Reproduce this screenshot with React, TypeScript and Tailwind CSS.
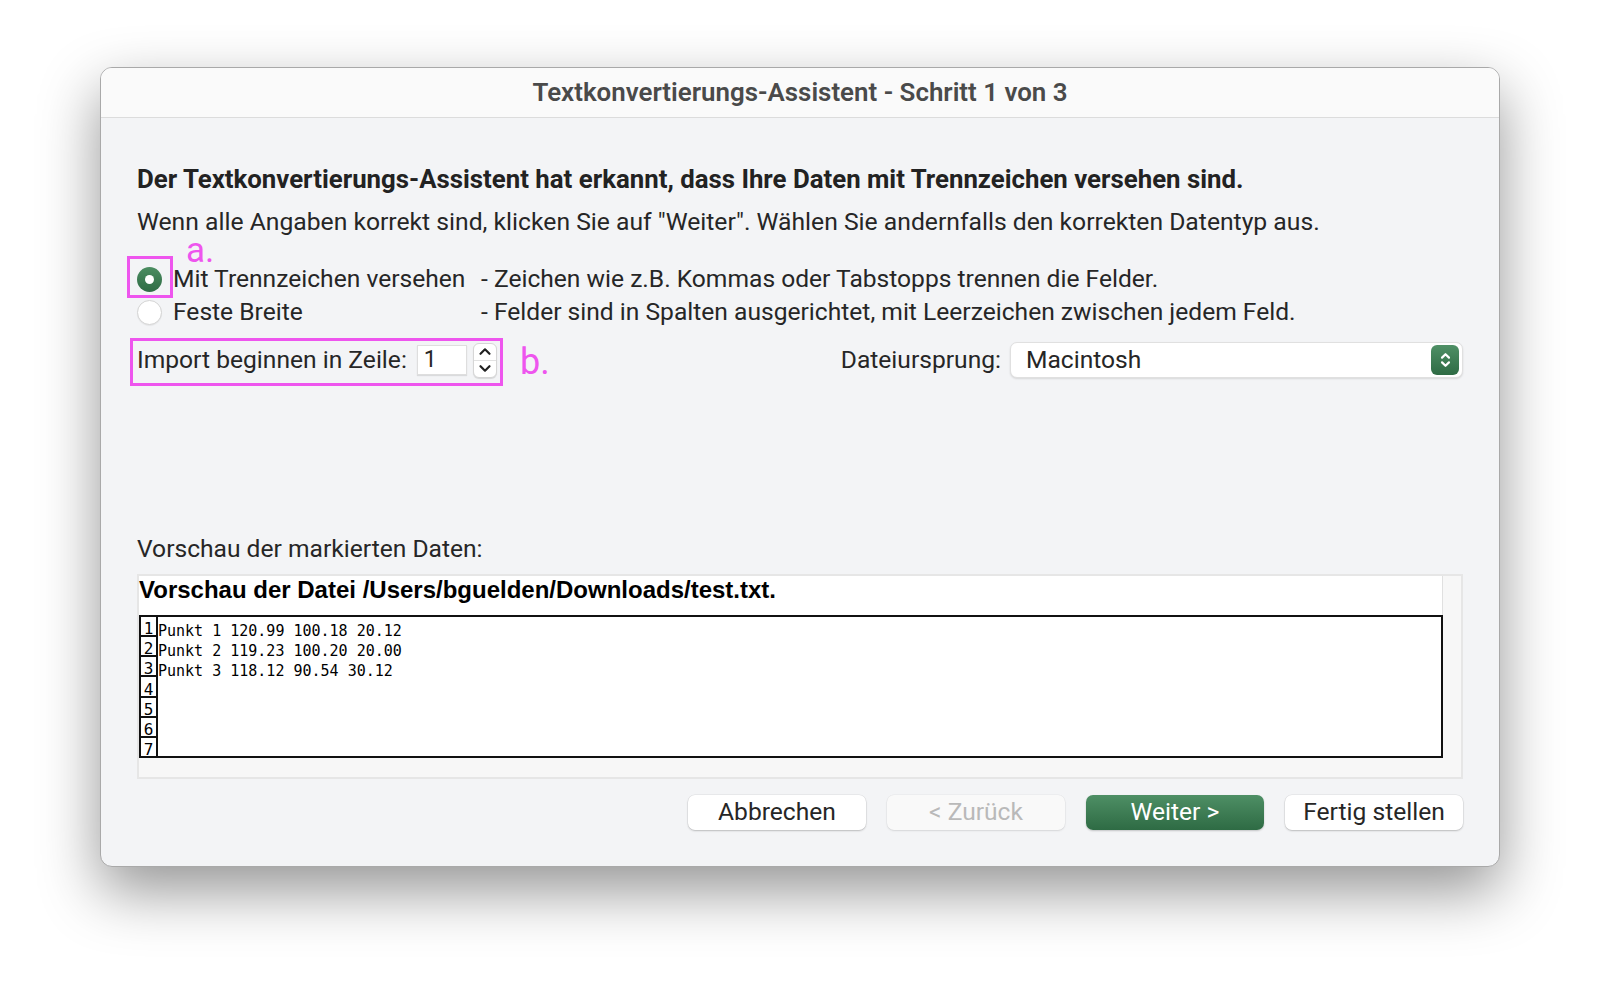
import React from "react";

function UpDown({ color, w, h }: { color: string; w: number; h: number }) {
  return (
    <svg width={w} height={h} viewBox="0 0 12 20" fill="none">
      <path d="M2.8 7.8 L6 4.6 L9.2 7.8" stroke={color} strokeWidth="2" strokeLinecap="round" strokeLinejoin="round" />
      <path d="M2.8 12.2 L6 15.4 L9.2 12.2" stroke={color} strokeWidth="2" strokeLinecap="round" strokeLinejoin="round" />
    </svg>
  );
}

export default function App() {
  const rows = [
    "Punkt 1 120.99 100.18 20.12",
    "Punkt 2 119.23 100.20 20.00",
    "Punkt 3 118.12 90.54 30.12",
    "",
    "",
    "",
    "",
  ];
  return (
    <div className="w-[1600px] h-[1000px] bg-white pt-[67px] pl-[100px] font-[Roboto,sans-serif]">
      <div className="w-[1400px] h-[800px] rounded-[12px] border border-[#a9a9a9] shadow-[0_24px_60px_rgba(0,0,0,0.42)] overflow-hidden flex flex-col bg-[#f3f4f6]">
        {/* Title bar */}
        <div className="h-[50px] shrink-0 bg-[#fafafa] border-b border-[#dcdcdc] flex items-center justify-center text-[25.9px] font-semibold text-[#4a4a4a]">
          Textkonvertierungs-Assistent - Schritt 1 von 3
        </div>

        {/* Body */}
        <div className="flex-1 flex flex-col px-[36px] pt-[46px] text-[#262626]">
          <div className="text-[25.8px] leading-[30px] font-bold text-[#222] whitespace-nowrap">
            Der Textkonvertierungs-Assistent hat erkannt, dass Ihre Daten mit Trennzeichen versehen sind.
          </div>
          <div className="mt-[13px] text-[24.7px] leading-[30px] whitespace-nowrap">
            Wenn alle Angaben korrekt sind, klicken Sie auf "Weiter". Wählen Sie andernfalls den korrekten Datentyp aus.
          </div>

          {/* Radios */}
          <div className="mt-[26px] grid grid-cols-[344px_1fr] text-[24.6px] whitespace-nowrap">
            <div className="relative h-[33px] flex items-center gap-[11px]">
              <div className="w-[25px] h-[25px] rounded-full bg-linear-to-b from-[#4b8d61] to-[#2f6c45] flex items-center justify-center shrink-0">
                <div className="w-[9px] h-[9px] rounded-full bg-white" />
              </div>
              <span>Mit Trennzeichen versehen</span>
              <div className="absolute left-[-10px] top-[-7px] w-[46px] h-[42px] border-[3px] border-[#ee55ee]" />
              <div className="absolute left-[49px] top-[-22px] text-[35px] leading-[20px] text-[#ee55ee]">a.</div>
            </div>
            <div className="h-[33px] flex items-center">- Zeichen wie z.B. Kommas oder Tabstopps trennen die Felder.</div>
            <div className="h-[33px] flex items-center gap-[11px]">
              <div className="w-[25px] h-[25px] rounded-full bg-white border border-[#d4d4d4] shadow-[0_1px_1px_rgba(0,0,0,0.06)] shrink-0" />
              <span>Feste Breite</span>
            </div>
            <div className="h-[33px] flex items-center">- Felder sind in Spalten ausgerichtet, mit Leerzeichen zwischen jedem Feld.</div>
          </div>

          {/* Import row */}
          <div className="mt-[13px] h-[36px] flex items-center justify-between text-[24.6px] whitespace-nowrap relative">
            <div className="flex items-center relative">
              <span>Import beginnen in Zeile:</span>
              <div className="ml-[10px] w-[50px] h-[30px] bg-white border border-[#dedede] shadow-[0_1px_1px_rgba(0,0,0,0.1)] flex items-center pl-[6px] text-[23px]">
                1
              </div>
              <div className="ml-[6px] w-[24px] h-[35px] rounded-[6px] bg-white border border-[#d6d6d6] shadow-[0_1px_1px_rgba(0,0,0,0.12)] flex flex-col overflow-hidden">
                <div className="flex-1 flex items-center justify-center border-b border-[#e2e2e2]">
                  <svg width="14" height="9" viewBox="0 0 14 9" fill="none">
                    <path d="M2.5 6.8 L7 2.3 L11.5 6.8" stroke="#222" strokeWidth="2.2" strokeLinecap="round" strokeLinejoin="round" />
                  </svg>
                </div>
                <div className="flex-1 flex items-center justify-center">
                  <svg width="14" height="9" viewBox="0 0 14 9" fill="none">
                    <path d="M2.5 2.2 L7 6.7 L11.5 2.2" stroke="#222" strokeWidth="2.2" strokeLinecap="round" strokeLinejoin="round" />
                  </svg>
                </div>
              </div>
              <div className="absolute left-[-7px] top-[-4px] w-[373px] h-[48px] border-[3px] border-[#ee55ee]" />
              <div className="absolute left-[383px] top-[0px] text-[36px] leading-[40px] text-[#ee55ee]">b.</div>
            </div>
            <div className="flex items-center">
              <span>Dateiursprung:</span>
              <div className="ml-[9px] w-[453px] h-[36px] rounded-[7px] bg-white border border-[#e0e0e0] shadow-[0_1px_2px_rgba(0,0,0,0.12)] flex items-center justify-between pl-[15px] pr-[3px]">
                <span>Macintosh</span>
                <div className="w-[28px] h-[30px] rounded-[6px] bg-linear-to-b from-[#4f9066] to-[#2e6b44] flex items-center justify-center">
                  <UpDown color="#ffffff" w={13} h={22} />
                </div>
              </div>
            </div>
          </div>

          {/* Preview label */}
          <div className="mt-[156px] text-[24.6px] leading-[30px] whitespace-nowrap">Vorschau der markierten Daten:</div>

          {/* Preview box */}
          <div className="mt-[10px] h-[205px] border-2 border-[#e6e6e6] bg-[#f7f7f7] flex">
            <div className="w-[1304px] flex flex-col">
              <div className="h-[39px] bg-white border-r border-[#e0e0e0] font-['Liberation_Sans',sans-serif] font-bold text-[24px] leading-[28px] text-black whitespace-nowrap">
                Vorschau der Datei /Users/bguelden/Downloads/test.txt.
              </div>
              <div className="h-[143px] border-2 border-[#111] bg-white flex font-['DejaVu_Sans_Mono',monospace] text-black">
                <div className="w-[17px] border-r-2 border-[#111] flex flex-col">
                  {rows.map((_, i) => (
                    <div
                      key={i}
                      className={`flex-1 flex items-end justify-center text-[16px] leading-[13px] ${i < 6 ? "border-b-2 border-[#111]" : ""}`}
                    >
                      {i + 1}
                    </div>
                  ))}
                </div>
                <div className="flex-1 flex flex-col">
                  {rows.map((r, i) => (
                    <div key={i} className="flex-1 flex items-end text-[15px] leading-[12px] whitespace-pre">
                      {r}
                    </div>
                  ))}
                </div>
              </div>
            </div>
          </div>

          {/* Buttons */}
          <div className="mt-[16px] flex justify-end gap-[21px] text-[24.6px] whitespace-nowrap">
            <div className="w-[178px] h-[35px] rounded-[7px] bg-white shadow-[0_1px_2px_rgba(0,0,0,0.2),0_0_0_0.5px_rgba(0,0,0,0.08)] flex items-center justify-center text-[#262626]">
              Abbrechen
            </div>
            <div className="w-[178px] h-[35px] rounded-[7px] bg-[#f9f9f9] shadow-[0_1px_2px_rgba(0,0,0,0.1),0_0_0_0.5px_rgba(0,0,0,0.05)] flex items-center justify-center text-[#b9b9b9]">
              &lt; Zurück
            </div>
            <div className="w-[178px] h-[35px] rounded-[7px] bg-linear-to-b from-[#4e8f65] to-[#2e6b44] shadow-[0_1px_2px_rgba(0,0,0,0.2)] flex items-center justify-center text-white">
              Weiter &gt;
            </div>
            <div className="w-[178px] h-[35px] rounded-[7px] bg-white shadow-[0_1px_2px_rgba(0,0,0,0.2),0_0_0_0.5px_rgba(0,0,0,0.08)] flex items-center justify-center text-[#262626]">
              Fertig stellen
            </div>
          </div>
        </div>
      </div>
    </div>
  );
}
